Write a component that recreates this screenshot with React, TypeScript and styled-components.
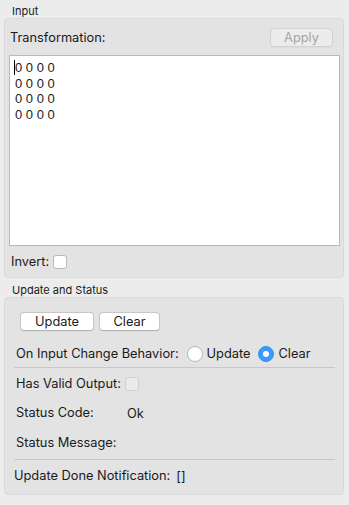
import React from "react";
import styled, { createGlobalStyle } from "styled-components";

const GlobalStyle = createGlobalStyle`
  html, body {
    margin: 0;
    padding: 0;
    background: #ececec;
  }
  body {
    font-family: Inter, "Liberation Sans", Arial, sans-serif;
    font-size: 12.8px;
    color: #1a1a1a;
  }
`;

const Page = styled.div`
  width: 340px;
  padding-left: 4px;
  min-height: 505px;
`;

const SectionTitle = styled.div<{ $top: number }>`
  padding-top: ${(p) => p.$top}px;
  padding-left: 8px;
  font-size: 11px;
  line-height: 13px;
  height: 13px;
`;

const Group = styled.section<{ $pad: string }>`
  background: #e3e3e3;
  border: 1px solid #d9d9d9;
  border-radius: 4px;
  padding: ${(p) => p.$pad};
  display: flex;
  flex-direction: column;
`;

const HeaderRow = styled.div`
  margin-top: 9px;
  height: 19px;
  display: flex;
  align-items: center;
  justify-content: space-between;
  padding: 0 7px 0 1px;
`;

const Label = styled.span`
  line-height: 16px;
  white-space: nowrap;
`;

const Button = styled.button<{ $w: number }>`
  width: ${(p) => p.$w}px;
  height: 19px;
  padding: 0;
  font-family: inherit;
  font-size: 12.8px;
  color: #1a1a1a;
  background: #fff;
  border: 1px solid #c6c6c6;
  border-bottom-color: #b4b4b4;
  border-radius: 4px;
  box-shadow: 0 0.5px 0 rgba(0, 0, 0, 0.05);

  &:disabled {
    background: #ececec;
    color: #a5a5a5;
    border-color: #d2d2d2;
  }
`;

const Editor = styled.div`
  margin-top: 8px;
  background: #fff;
  border: 1px solid #b9b9b9;
  padding: 4px 5px;
  box-sizing: border-box;
  height: 191px;
  font-family: "Liberation Sans", Arial, sans-serif;
  font-size: 13px;
  line-height: 15.7px;
  white-space: pre;
`;

const Caret = styled.span`
  display: inline-block;
  width: 1px;
  height: 15px;
  margin-left: -1px;
  background: #000;
  vertical-align: -3px;
`;

const Row = styled.div<{ $mt: number; $indent?: number }>`
  margin-top: ${(p) => p.$mt}px;
  height: 20px;
  display: flex;
  align-items: center;
  padding-left: ${(p) => p.$indent ?? 0}px;
`;

const FieldGrid = styled.div`
  display: grid;
  grid-template-columns: 111px 1fr;
  align-items: center;
  height: 20px;
`;

const Checkbox = styled.span<{ $disabled?: boolean }>`
  display: inline-block;
  box-sizing: border-box;
  width: 14px;
  height: 14px;
  border-radius: 3px;
  border: 1px solid ${(p) => (p.$disabled ? "#d0d0d0" : "#b9b9b9")};
  background: ${(p) => (p.$disabled ? "#ebebeb" : "#fff")};
  margin-left: 4px;
`;

const Radio = styled.span<{ $on?: boolean }>`
  box-sizing: border-box;
  width: 16px;
  height: 16px;
  border-radius: 50%;
  margin: 0 4px 0 8px;
  display: inline-flex;
  align-items: center;
  justify-content: center;
  background: ${(p) => (p.$on ? "#3b99fc" : "#fff")};
  border: 1px solid ${(p) => (p.$on ? "#3591f5" : "#b9b9b9")};

  &::after {
    content: "";
    display: ${(p) => (p.$on ? "block" : "none")};
    width: 6px;
    height: 6px;
    border-radius: 50%;
    background: #fff;
  }
`;

const ButtonRow = styled.div`
  margin-top: 14px;
  padding-left: 6px;
  display: flex;
  gap: 5px;
`;

const Separator = styled.hr<{ $mt: number }>`
  margin: ${(p) => p.$mt}px 0 0 0;
  border: none;
  height: 1px;
  background: #c8c8c8;
`;

const Value = styled.span<{ $gap?: number }>`
  margin-left: ${(p) => p.$gap ?? 0}px;
`;

const matrix = ["0 0 0 0", "0 0 0 0", "0 0 0 0", "0 0 0 0"];

export default function App() {
  return (
    <Page>
      <GlobalStyle />
      <SectionTitle $top={5}>Input</SectionTitle>
      <Group $pad="0 3px 5px 4px">
        <HeaderRow>
          <Label>Transformation:</Label>
          <Button $w={63} disabled>
            Apply
          </Button>
        </HeaderRow>
        <Editor>
          {matrix.map((line, i) => (
            <div key={i}>
              {i === 0 && <Caret />}
              {line}
            </div>
          ))}
        </Editor>
        <Row $mt={6} $indent={2}>
          <Label>Invert:</Label>
          <Checkbox />
        </Row>
      </Group>

      <SectionTitle $top={6}>Update and Status</SectionTitle>
      <Group $pad="0 8px 8px 9px">
        <ButtonRow>
          <Button $w={74}>Update</Button>
          <Button $w={61}>Clear</Button>
        </ButtonRow>
        <Row $mt={13} $indent={2}>
          <Label>On Input Change Behavior:</Label>
          <Radio />
          <Label>Update</Label>
          <Radio $on />
          <Label>Clear</Label>
        </Row>
        <Separator $mt={3} />
        <Row $mt={6} $indent={2}>
          <Label>Has Valid Output:</Label>
          <Checkbox $disabled />
        </Row>
        <Row $mt={9} $indent={2}>
          <FieldGrid>
            <Label>Status Code:</Label>
            <Value>Ok</Value>
          </FieldGrid>
        </Row>
        <Row $mt={10} $indent={2}>
          <Label>Status Message:</Label>
        </Row>
        <Separator $mt={6} />
        <Row $mt={6}>
          <Label>Update Done Notification:</Label>
          <Value $gap={6}>[]</Value>
        </Row>
      </Group>
    </Page>
  );
}
